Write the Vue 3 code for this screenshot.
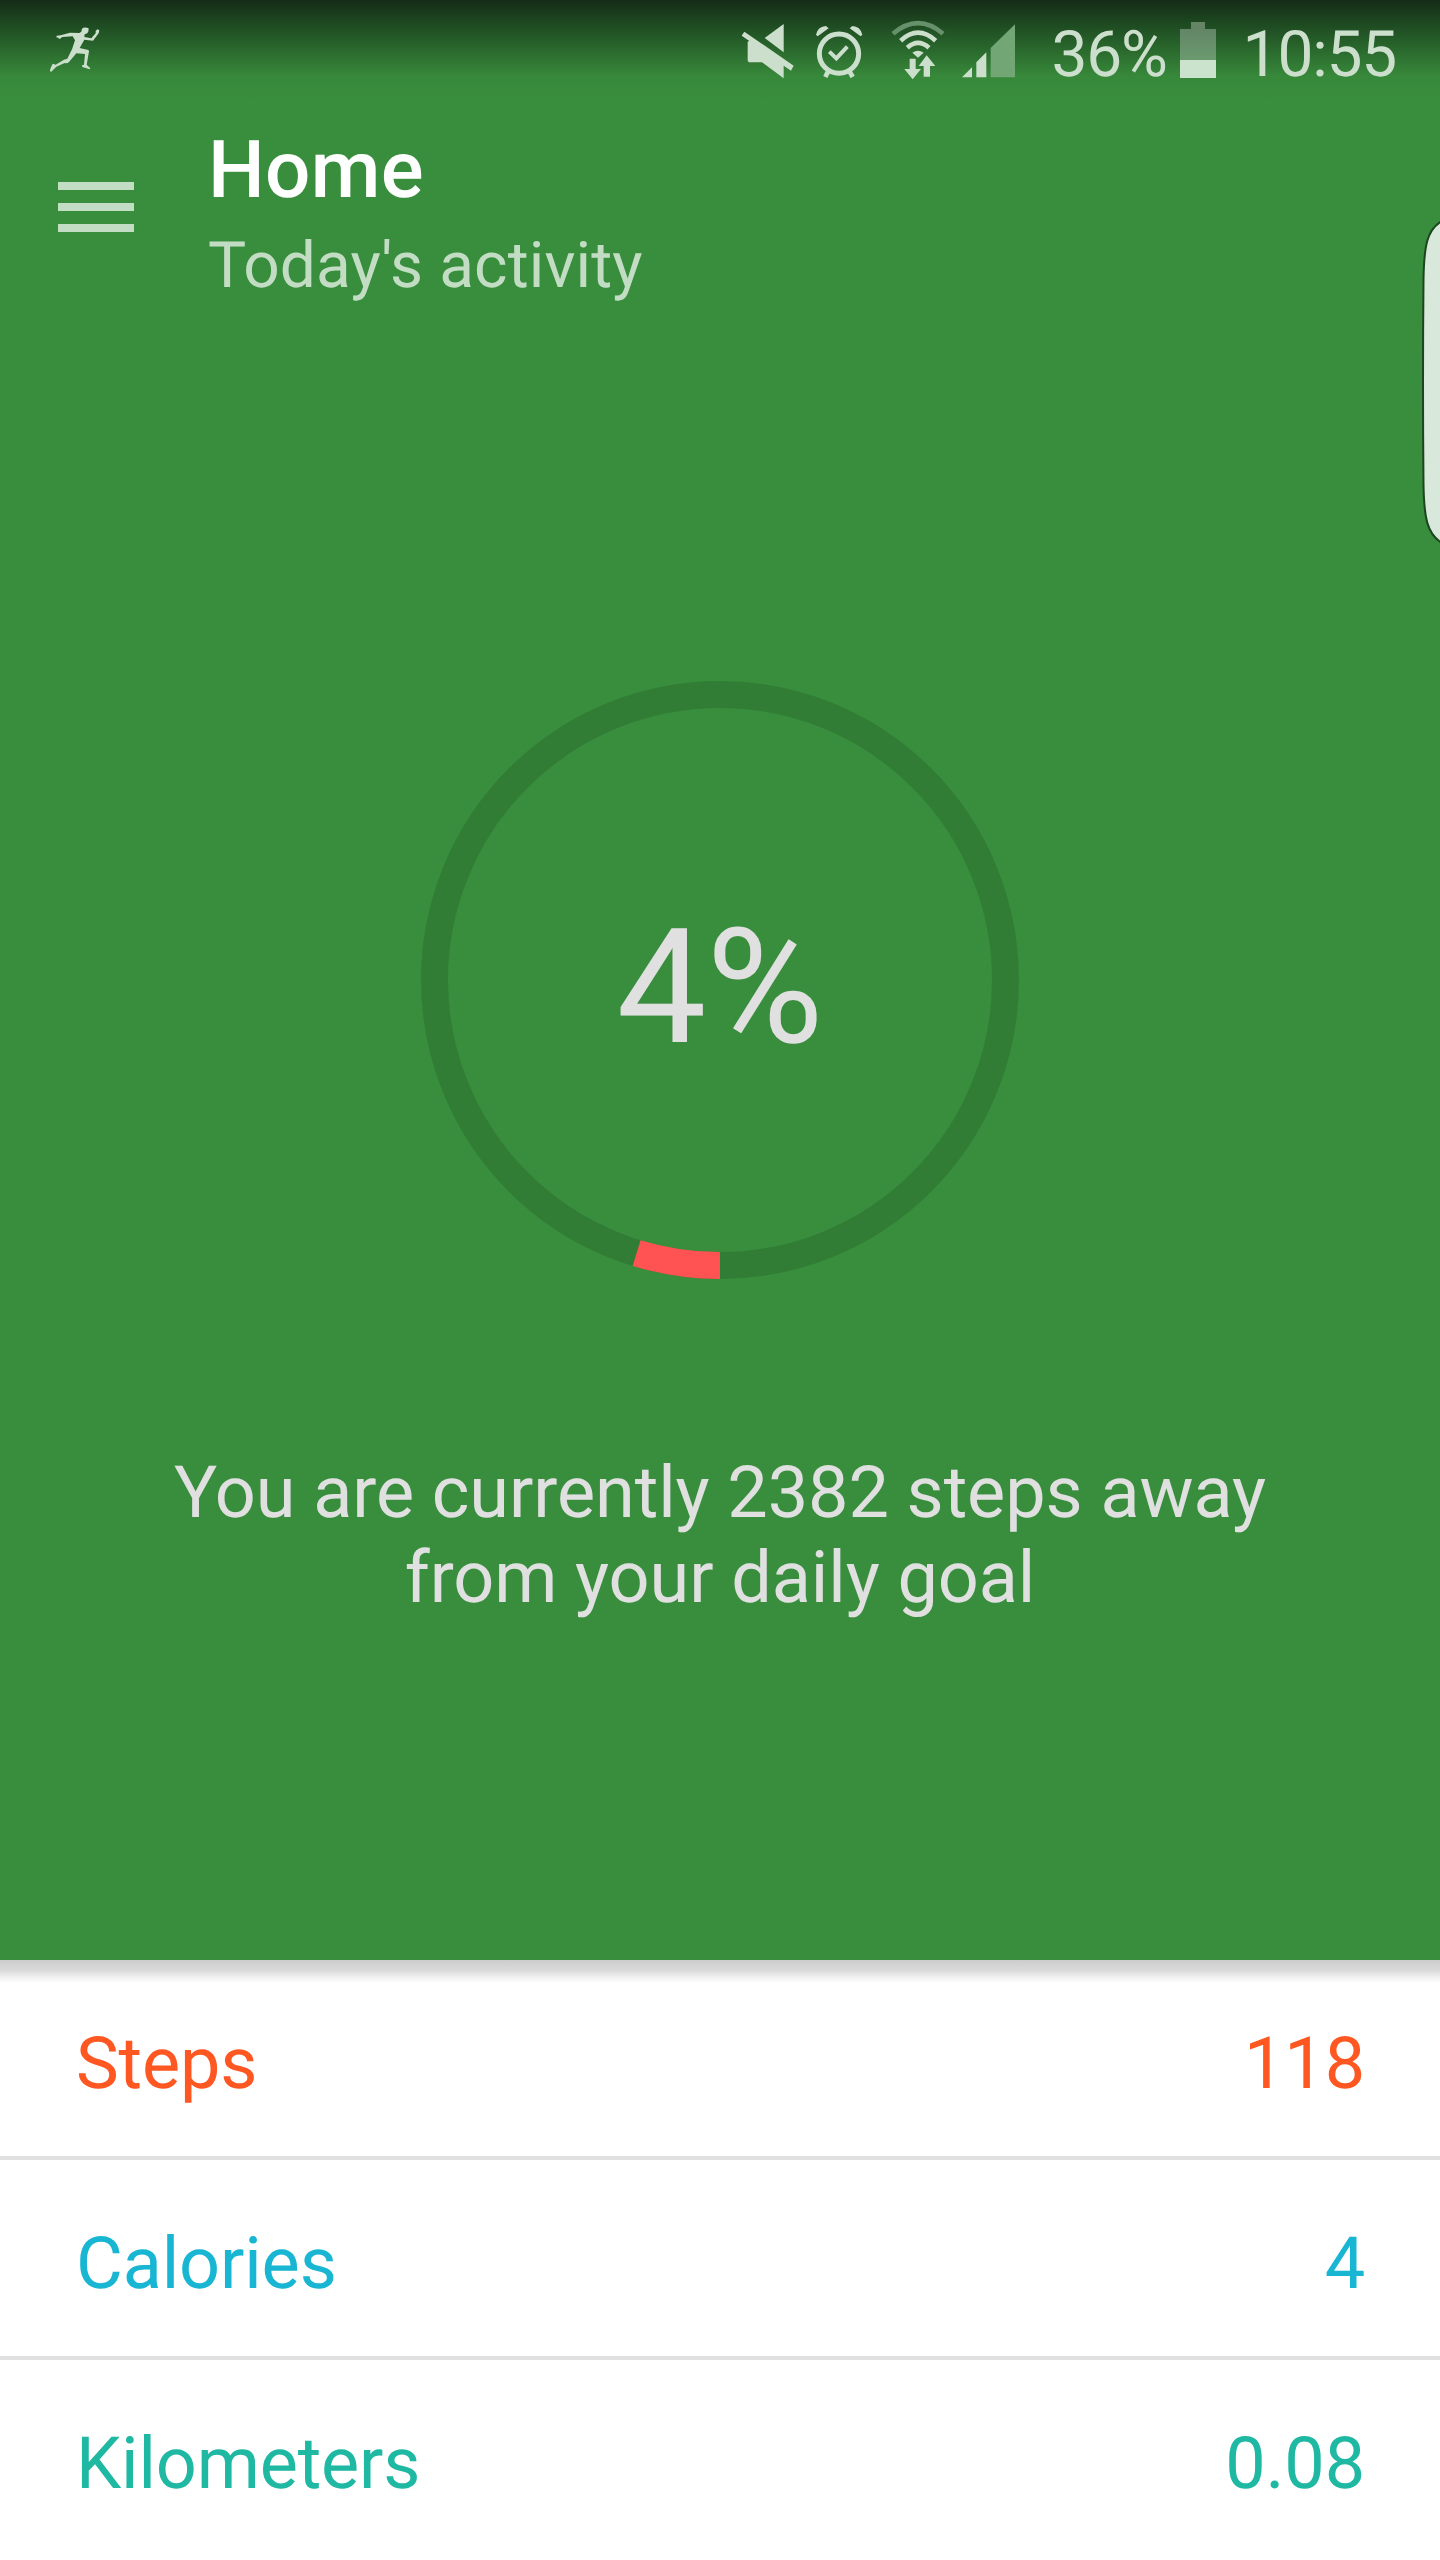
<template>
  <div class="screen">
    <section class="hero">
      <div class="status-bar">
        <svg class="runner" viewBox="0 0 150 138" width="50" height="46">
          <path
            d="M96 5 Q104 -1 116 4 L115 14 Q112 20 104 22 L103 30 L124 34 L137 19 L137 12 L142 7 L148 10 L146 19 L129 41 L103 38 L89 63 L115 69 Q119 72 116 79 L110 113 L121 124 L119 127 L97 120 L96 115 L102 113 L105 81 L79 79 L57 105 Q52 110 44 108 L19 119 L3 135 L0 132 L1 125 L8 110 L17 113 L42 98 L52 95 L66 67 L75 40 L68 28 L37 30 L29 36 L24 32 L19 31 L20 26 L32 25 L60 17 L88 18 L94 14 Z" />
        </svg>
        <div class="status-icons">
          <!-- muted -->
          <svg viewBox="0 0 160 170" width="53.33" height="56.67">
            <path d="M128 9 L128 94 L71 51 Z" />
            <path d="M10 32 L158 134 L150 149 L128 134 L128 172 L63 124 L28 124 Q20 124 20 116 L20 62 L25 60 L2 44 Z" />
          </svg>
          <!-- alarm -->
          <svg class="alarm" viewBox="0 0 140 160" width="46.67" height="53.33">
            <circle class="line" cx="69" cy="86" r="59" stroke-width="15" />
            <path class="line" d="M40 80 L61 100 L94 65" stroke-width="12" />
            <path class="line" d="M36 140 L28 156 M101 140 L110 156" stroke-width="14" />
            <path d="M0 29 Q6 4 30 3 L38 10 L5 34 Z M139 29 Q133 4 109 3 L101 10 L134 34 Z" />
          </svg>
          <!-- wifi -->
          <svg class="wifi" viewBox="0 0 162 180" width="54" height="60">
            <path class="line faint" d="M6 41 Q81 -22 156 41" stroke-width="14" />
            <path class="line" d="M29 62 Q81 14 134 62" stroke-width="14" />
            <path class="line" d="M49 83 Q81 54 114 83" stroke-width="14" />
            <path d="M64 98 Q81 86 98 98 L81 113 Z" />
            <path d="M56 116 H74 V147 H90 L65 178 L40 147 H56 Z" />
            <path d="M98 170 V138 H83 L107 106 L133 138 H117 V170 Z" />
          </svg>
          <!-- signal -->
          <svg class="signal" viewBox="0 0 160 162" width="53.33" height="54">
            <path d="M0 160 L30 130 V160 Z" />
            <path d="M43 160 V115 L73 85 V160 Z" />
            <path class="faint-fill" d="M86 160 V72 L159 1 V160 Z" />
          </svg>
          <span class="battery-text">36%</span>
          <div class="battery"></div>
          <span class="time">10:55</span>
        </div>
      </div>

      <header class="toolbar">
        <button class="menu" aria-label="Menu"><i></i><i></i><i></i></button>
        <div>
          <h1>Home</h1>
          <h2>Today's activity</h2>
        </div>
      </header>

      <div class="progress">
        <svg viewBox="0 0 600 600" width="600" height="600">
          <circle class="track" cx="300" cy="300" :r="radius" />
          <circle
            class="value"
            cx="300"
            cy="300"
            :r="radius"
            :stroke-dasharray="dash"
            transform="rotate(90 300 300)" />
        </svg>
        <span class="percent">{{ percent }}%</span>
      </div>

      <p class="message">
        You are currently {{ goal - steps }} steps away<br />from your daily goal
      </p>

      <svg class="edge-handle" viewBox="0 0 20 324" width="20" height="324">
        <path d="M22 1 C7 9 4 26 3.5 60 Q2.5 162 3.5 264 C4 298 7 314 22 323" />
      </svg>
    </section>

    <ul class="stats">
      <li v-for="stat in stats" :key="stat.label" :class="stat.name">
        <span>{{ stat.label }}</span>
        <span>{{ stat.value }}</span>
      </li>
    </ul>
  </div>
</template>

<script setup>
import { computed, ref } from 'vue'

const goal = 2500
const radius = 285.5
const steps = ref(118)

const stats = computed(() => [
  { name: 'steps', label: 'Steps', value: steps.value },
  { name: 'calories', label: 'Calories', value: 4 },
  { name: 'distance', label: 'Kilometers', value: '0.08' }
])

const percent = computed(() => Math.floor((steps.value / goal) * 100))

const dash = computed(() => {
  const length = 2 * Math.PI * radius
  return `${(length * steps.value) / goal} ${length}`
})
</script>

<style>
body {
  margin: 0;
}
</style>

<style scoped>
.screen {
  width: 1440px;
  height: 2560px;
  overflow: hidden;
  background: #fff;
  font-family: Roboto, sans-serif;
  text-rendering: geometricPrecision;
}

.hero {
  position: relative;
  z-index: 1;
  height: 1960px;
  background: #388e3c;
}

/* soft drop shadow below the green area */
.hero::after {
  content: '';
  position: absolute;
  top: 100%;
  left: 0;
  width: 100%;
  height: 23px;
  background: linear-gradient(#cdcdcd, #dadada 45%, #f1f1f1 75%, #fff);
}

.status-bar {
  display: flex;
  justify-content: space-between;
  box-sizing: border-box;
  height: 100px;
  padding: 0 44px 0 50px;
  background: linear-gradient(#152c18, #1b431e 18px, #37883a 76px, #388e3c 100px);
  color: #cbdfcc;
}

.status-bar svg {
  flex: none;
  overflow: visible;
  fill: #cbdfcc;
}

.runner {
  margin-top: 27px;
}

.status-icons {
  display: flex;
  align-items: flex-start;
}

.status-icons > svg {
  margin-top: 21px;
}

.status-icons .line {
  fill: none;
  stroke: #cbdfcc;
}

.status-icons .faint {
  stroke: #66916a;
}

.status-icons .faint-fill {
  fill: #72a675;
}

.status-icons > .alarm {
  margin: 25px 0 0 21.7px;
}

.status-icons > .wifi {
  margin: 20px 0 0 28.3px;
}

.status-icons > .signal {
  margin: 24px 0 0 17px;
}

.battery-text,
.time {
  font-size: 64px;
  line-height: 76px;
  letter-spacing: -1.2px;
  margin-top: 17px;
}

.battery-text {
  margin-left: 36px;
}

.battery {
  width: 36px;
  height: 56px;
  margin: 22px 0 0 13px;
  background:
    linear-gradient(#cbe2cd, #cbe2cd) 0 100% / 36px 18px no-repeat,
    linear-gradient(#638566, #6c9a6f) 0 7px / 36px 31px no-repeat,
    linear-gradient(#638566, #638566) 11px 0 / 14px 7px no-repeat;
}

.time {
  margin-left: 27px;
}

.toolbar {
  display: flex;
  height: 222px;
  padding: 23px 0 0 58px;
}

.menu {
  display: flex;
  flex-direction: column;
  gap: 13px;
  width: 76px;
  margin: 59px 74px 0 0;
  padding: 0;
  border: none;
  background: none;
}

.menu i {
  width: 76px;
  height: 8px;
  background: #c3ddc5;
}

h1,
h2 {
  margin: 0;
  white-space: nowrap;
}

h1 {
  font-size: 80px;
  font-weight: 500;
  line-height: 94px;
  letter-spacing: 0.3px;
  color: #fff;
}

h2 {
  font-size: 64px;
  font-weight: 400;
  line-height: 76px;
  letter-spacing: 0.1px;
  margin-top: 11px;
  color: #c3ddc5;
}

.progress {
  display: grid;
  place-items: center;
  height: 600px;
  margin-top: 335px;
}

.progress > * {
  grid-area: 1 / 1;
}

.progress circle {
  fill: none;
  stroke-width: 27;
}

.track {
  stroke: #317d35;
}

.value {
  stroke: #ff5252;
}

.percent {
  font-size: 160px;
  line-height: 188px;
  padding-top: 18px;
  color: #e0e0e0;
}

.message {
  margin: 170px 0 0;
  font-size: 72px;
  line-height: 85px;
  letter-spacing: -0.09px;
  text-align: center;
  color: #e0e0e0;
}

.edge-handle {
  position: absolute;
  top: 220px;
  right: 0;
  fill: #d8e8da;
  stroke: #1d4520;
  stroke-width: 2;
}

.stats {
  margin: 0;
  padding: 0;
  list-style: none;
}

.stats li {
  display: flex;
  align-items: center;
  justify-content: space-between;
  box-sizing: border-box;
  height: 200px;
  padding: 10px 75px 0 76px;
  border-bottom: 4px solid #e0e0e0;
  font-size: 72px;
  letter-spacing: -0.15px;
}

.stats li:last-child {
  border-bottom-color: transparent;
}

.steps {
  color: #ff5722;
}

.calories {
  color: #18b6d2;
}

.distance {
  color: #1fb8a2;
}
</style>
